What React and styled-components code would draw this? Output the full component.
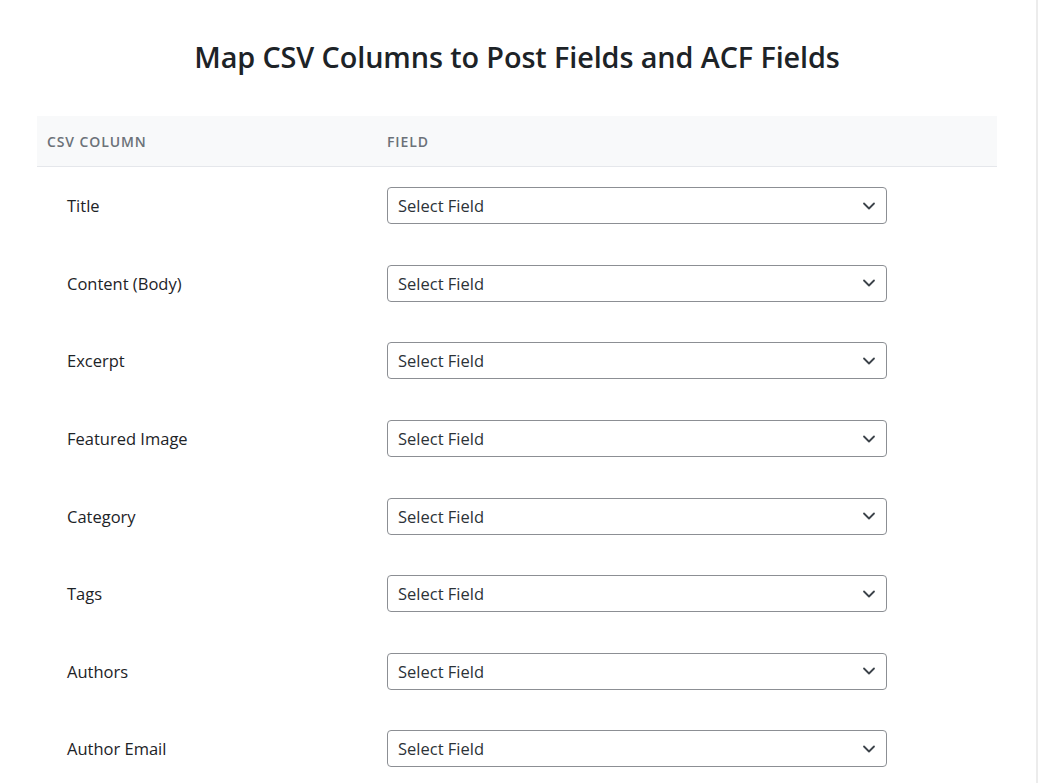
import React from 'react'
import styled, { createGlobalStyle } from 'styled-components'

const GlobalStyle = createGlobalStyle`
  html, body {
    margin: 0;
    padding: 0;
    background: #fff;
  }
  body {
    font-family: "Open Sans", "Noto Sans", sans-serif;
    color: #1d2327;
  }
`

const Page = styled.div`
  width: 1038px;
  height: 783px;
  border-right: 2px solid #ececec;
  overflow: hidden;
  box-sizing: border-box;
  padding: 0 0 0 37px;
`

const Title = styled.h1`
  margin: 0;
  padding: 37px 0 0;
  width: 960px;
  height: 116px;
  box-sizing: border-box;
  text-align: center;
  font-size: 28.8px;
  font-weight: 600;
  color: #1d2327;
  letter-spacing: -0.1px;
`

const Table = styled.div`
  width: 960px;
`

const Row = styled.div`
  display: grid;
  grid-template-columns: 340px 1fr;
  align-items: center;
`

const HeadRow = styled(Row)`
  height: 50px;
  background: #f8f9fa;
  border-bottom: 1px solid #e5e7eb;
`

const HeadCell = styled.div`
  padding-left: 10px;
  font-size: 14px;
  font-weight: 600;
  letter-spacing: 0.9px;
  text-transform: uppercase;
  color: #6b7178;
`

const BodyRow = styled(Row)`
  padding: 20.3px 0;
`

const Label = styled.div`
  padding-left: 30px;
  font-size: 16.5px;
  color: #1d2327;
`

const FieldCell = styled.div`
  padding-left: 10px;
`

const SelectBox = styled.div`
  width: 500px;
  height: 37px;
  box-sizing: border-box;
  border: 1px solid #8c8f94;
  border-radius: 4px;
  display: flex;
  align-items: center;
  justify-content: space-between;
  padding: 0 10px 0 10px;
  font-size: 16.5px;
  color: #2c3338;
  background: #fff;
`

const Chevron = () => (
  <svg width="14" height="14" viewBox="0 0 14 14" fill="none">
    <path d="M2 4.5 L7 9.5 L12 4.5" stroke="#3c434a" strokeWidth="1.8" strokeLinecap="round" strokeLinejoin="round" />
  </svg>
)

const fields = [
  'Title',
  'Content (Body)',
  'Excerpt',
  'Featured Image',
  'Category',
  'Tags',
  'Authors',
  'Author Email',
]

export default function App() {
  return (
    <>
      <GlobalStyle />
      <Page>
        <Title>Map CSV Columns to Post Fields and ACF Fields</Title>
        <Table>
          <HeadRow>
            <HeadCell>CSV Column</HeadCell>
            <HeadCell>Field</HeadCell>
          </HeadRow>
          {fields.map(f => (
            <BodyRow key={f}>
              <Label>{f}</Label>
              <FieldCell>
                <SelectBox>
                  <span>Select Field</span>
                  <Chevron />
                </SelectBox>
              </FieldCell>
            </BodyRow>
          ))}
        </Table>
      </Page>
    </>
  )
}
